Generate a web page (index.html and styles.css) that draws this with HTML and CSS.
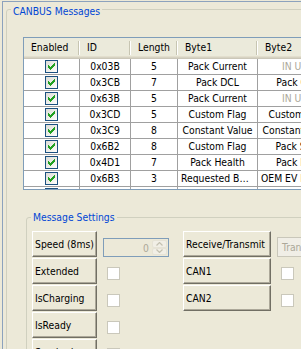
FILE: index.html
```html
<!DOCTYPE html>
<html>
<head>
<meta charset="utf-8">
<link rel="stylesheet" href="styles.css">
</head>
<body>
<div class="frame">
  <div class="group group-main">
    <span class="group-title">CANBUS Messages</span>
    <div class="grid-wrap">
      <table class="grid">
        <thead>
          <tr>
            <th class="c-en">Enabled</th>
            <th class="c-id">ID</th>
            <th class="c-len">Length</th>
            <th class="c-b">Byte1</th>
            <th class="c-b">Byte2</th>
            <th class="c-b">Byte3</th>
          </tr>
        </thead>
        <tbody>
          <tr><td><span class="chk"><svg viewBox="0 0 7 7" width="7" height="7"><path d="M0 2h1v1h1v1h1v-1h1v-1h1v-1h1v-1h1v3h-1v1h-1v1h-1v1h-1v1h-1v-1h-1v-1h-1z"/></svg></span></td><td>0x03B</td><td>5</td><td>Pack Current</td><td class="dim">IN USE</td><td class="dim">IN USE</td></tr>
          <tr><td><span class="chk"><svg viewBox="0 0 7 7" width="7" height="7"><path d="M0 2h1v1h1v1h1v-1h1v-1h1v-1h1v-1h1v3h-1v1h-1v1h-1v1h-1v1h-1v-1h-1v-1h-1z"/></svg></span></td><td>0x3CB</td><td>7</td><td>Pack DCL</td><td>Pack CCL</td><td>Pack Voltage</td></tr>
          <tr><td><span class="chk"><svg viewBox="0 0 7 7" width="7" height="7"><path d="M0 2h1v1h1v1h1v-1h1v-1h1v-1h1v-1h1v3h-1v1h-1v1h-1v1h-1v1h-1v-1h-1v-1h-1z"/></svg></span></td><td>0x63B</td><td>5</td><td>Pack Current</td><td class="dim">IN USE</td><td>Pack SOC</td></tr>
          <tr><td><span class="chk"><svg viewBox="0 0 7 7" width="7" height="7"><path d="M0 2h1v1h1v1h1v-1h1v-1h1v-1h1v-1h1v3h-1v1h-1v1h-1v1h-1v1h-1v-1h-1v-1h-1z"/></svg></span></td><td>0x3CD</td><td>5</td><td>Custom Flag</td><td>Custom Flag</td><td>Custom Flag</td></tr>
          <tr><td><span class="chk"><svg viewBox="0 0 7 7" width="7" height="7"><path d="M0 2h1v1h1v1h1v-1h1v-1h1v-1h1v-1h1v3h-1v1h-1v1h-1v1h-1v1h-1v-1h-1v-1h-1z"/></svg></span></td><td>0x3C9</td><td>8</td><td>Constant Value</td><td>Constant Value</td><td>Constant Value</td></tr>
          <tr><td><span class="chk"><svg viewBox="0 0 7 7" width="7" height="7"><path d="M0 2h1v1h1v1h1v-1h1v-1h1v-1h1v-1h1v3h-1v1h-1v1h-1v1h-1v1h-1v-1h-1v-1h-1z"/></svg></span></td><td>0x6B2</td><td>8</td><td>Custom Flag</td><td>Pack SOC</td><td>Pack Health</td></tr>
          <tr><td><span class="chk"><svg viewBox="0 0 7 7" width="7" height="7"><path d="M0 2h1v1h1v1h1v-1h1v-1h1v-1h1v-1h1v3h-1v1h-1v1h-1v1h-1v1h-1v-1h-1v-1h-1z"/></svg></span></td><td>0x4D1</td><td>7</td><td>Pack Health</td><td>Pack DCL</td><td>Pack CCL</td></tr>
          <tr><td><span class="chk"><svg viewBox="0 0 7 7" width="7" height="7"><path d="M0 2h1v1h1v1h1v-1h1v-1h1v-1h1v-1h1v3h-1v1h-1v1h-1v1h-1v1h-1v-1h-1v-1h-1z"/></svg></span></td><td>0x6B3</td><td>3</td><td>Requested Balancing</td><td>OEM EV Battery Status</td><td>Pack SOC</td></tr>
          <tr><td><span class="chk"><svg viewBox="0 0 7 7" width="7" height="7"><path d="M0 2h1v1h1v1h1v-1h1v-1h1v-1h1v-1h1v3h-1v1h-1v1h-1v1h-1v1h-1v-1h-1v-1h-1z"/></svg></span></td><td>0x6B4</td><td>8</td><td>Pack Current</td><td>Pack Voltage</td><td>Pack SOC</td></tr>
        </tbody>
      </table>
    </div>

    <div class="group group-settings">
      <span class="group-title">Message Settings</span>
      <div class="settings">
        <div class="btn btn-center">Speed (8ms)</div>
        <div class="spin">
          <span class="spin-val">0</span>
          <span class="spin-btns">
            <span class="spin-half"><svg width="7" height="4" viewBox="0 0 7 4"><path d="M0.5 3.5 L3.5 0.5 L6.5 3.5" fill="none" stroke="#C4C1B1" stroke-width="1.2"/></svg></span>
            <span class="spin-half"><svg width="7" height="4" viewBox="0 0 7 4"><path d="M0.5 0.5 L3.5 3.5 L6.5 0.5" fill="none" stroke="#C4C1B1" stroke-width="1.2"/></svg></span>
          </span>
        </div>
        <div class="btn">Receive/Transmit</div>
        <div class="combo">Transmit</div>

        <div class="btn">Extended</div>
        <span class="box"></span>
        <div class="btn">CAN1</div>
        <span class="box"></span>

        <div class="btn">IsCharging</div>
        <span class="box"></span>
        <div class="btn">CAN2</div>
        <span class="box"></span>

        <div class="btn">IsReady</div>
        <span class="box"></span>
        <div></div>
        <div></div>

        <div class="btn">Sandard</div>
        <span class="box"></span>
      </div>
    </div>
  </div>
</div>
</body>
</html>
```

FILE: styles.css
```css
html, body {
  margin: 0;
  padding: 0;
  width: 301px;
  height: 349px;
  overflow: hidden;
  background: #ECE9D8;
  font-family: "DejaVu Sans Condensed", "DejaVu Sans", sans-serif;
  font-size: 10.3px;
  color: #000;
}

.frame {
  margin: 1px 0 0 2px;
  border-top: 1px solid #8CA2BD;
  border-left: 1px solid #8CA2BD;
  height: 420px;
  width: 400px;
}

.group {
  position: relative;
  border: 1px solid #D0D0BF;
  border-radius: 3px;
}

.group-title {
  position: absolute;
  left: 4px;
  padding: 0 2px;
  line-height: 13px;
  background: #ECE9D8;
  color: #0046D5;
  white-space: nowrap;
}

.group-main {
  margin: 7px 0 0 3px;
  padding: 27px 0 0 16px;
  height: 420px;
}
.group-main > .group-title { top: -5px; }

/* ---------- list grid ---------- */
.grid-wrap {
  border: 1px solid #7F9DB9;
  height: 151px;
  width: 400px;
  overflow: hidden;
  background: #fff;
}

.grid {
  table-layout: fixed;
  border-collapse: separate;
  border-spacing: 0;
  width: 394px;
}

.grid th, .grid td {
  box-sizing: border-box;
  white-space: nowrap;
  overflow: hidden;
  text-overflow: ellipsis;
}

.grid th {
  position: relative;
  height: 21px;
  padding: 0 0 3px 7px;
  text-align: left;
  font-weight: normal;
  background: #EBEADB;
  box-shadow: inset 0 -1px #CBC7B8, inset 0 -2px #D6D2C2, inset 0 -3px #E2DECD;
}
.grid th::after {
  content: "";
  position: absolute;
  right: 1px;
  top: 3px;
  bottom: 4px;
  width: 1px;
  background: #C7C5B2;
  box-shadow: 1px 0 0 #fff;
}

.c-en { width: 56px; }
.c-id { width: 51px; }
.c-len { width: 47px; }
.c-b { width: 80px; }

.grid td {
  height: 16px;
  padding: 0 3px;
  line-height: 15px;
  text-align: center;
  border-right: 1px solid #A0A0A0;
  border-bottom: 1px solid #A0A0A0;
}
.grid td.dim { color: #ACA899; }

.chk {
  display: block;
  box-sizing: border-box;
  width: 13px;
  height: 13px;
  margin: 1px auto;
  border: 1px solid #1C5180;
  background: linear-gradient(135deg, #DCDCD7 0%, #F4F4F0 70%, #FFFFFF 100%);
  padding: 2px 0 0 2px;
  line-height: 0;
}
.chk svg { display: block; fill: #21A121; }

/* ---------- message settings ---------- */
.group-settings {
  margin: 27px 0 0 3px;
  padding: 13px 0 0 5px;
  height: 200px;
}
.group-settings > .group-title { top: -7px; }

.settings {
  display: grid;
  grid-template-columns: 65px 74px 88px 100px;
  grid-auto-rows: 26px;
  column-gap: 6px;
  row-gap: 1px;
}

.btn {
  box-sizing: border-box;
  display: flex;
  align-items: center;
  padding: 0 0 0 2px;
  background: #ECE9D8;
  border: 1px solid;
  border-color: #FFFFFF #716F64 #716F64 #FFFFFF;
  box-shadow: inset -1px -1px 0 #ACA899;
  white-space: nowrap;
}
.btn-center { justify-content: center; padding: 0; }

.box {
  align-self: end;
  box-sizing: border-box;
  width: 13px;
  height: 13px;
  margin: 0 0 4px 4px;
  border: 1px solid #CAC8BB;
  background: #FFFFFF;
}

.spin {
  align-self: end;
  box-sizing: border-box;
  width: 66px;
  height: 19px;
  border: 1px solid #7F9DB9;
  background: #ECE9D8;
  display: flex;
  align-items: center;
  justify-content: flex-end;
  padding: 1px;
}
.spin-val {
  color: #ACA899;
  margin-right: 3px;
}
.spin-btns {
  display: flex;
  flex-direction: column;
  width: 15px;
  height: 15px;
}
.spin-half {
  flex: 1;
  display: flex;
  align-items: center;
  justify-content: center;
  background: #F1EFE6;
  border: 1px solid #E6E3D6;
  border-radius: 2px;
  box-sizing: border-box;
}
.spin-half svg { display: block; }

.combo {
  align-self: end;
  box-sizing: border-box;
  height: 20px;
  width: 100px;
  border: 1px solid #C9C7BA;
  background: #F0EEE6;
  color: #ACA899;
  padding: 0 0 0 4px;
  line-height: 18px;
  white-space: nowrap;
}
```
